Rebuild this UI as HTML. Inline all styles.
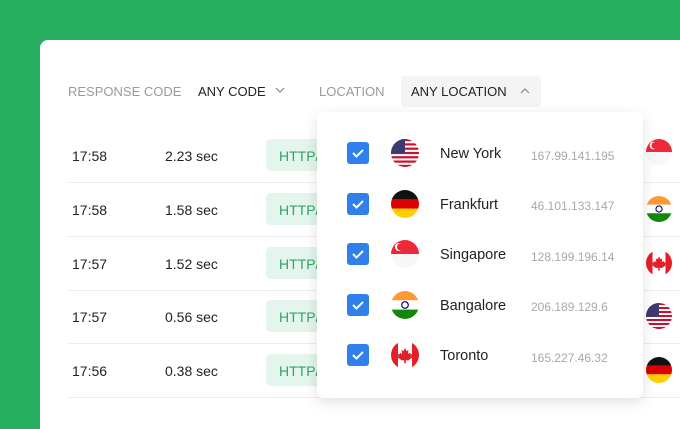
<!DOCTYPE html>
<html><head><meta charset="utf-8"><style>
*{margin:0;padding:0;box-sizing:border-box}
html,body{width:680px;height:429px;overflow:hidden}
body{background:#26ad5f;font-family:"Liberation Sans",Arial,sans-serif;position:relative}
.card{position:absolute;left:40px;top:40px;width:640px;height:389px;background:#fff;border-radius:8px 0 0 0}
.t{position:absolute;white-space:nowrap}
.lbl{font-size:13px;color:#9a9a9a;top:84px}
.val{font-size:13px;color:#222;top:84px}
.row{font-size:14px;color:#222}
.sep{position:absolute;left:68px;width:612px;height:1px;background:#ececec}
.badge{position:absolute;left:266px;width:70px;height:32px;background:#e3f5ec;border-radius:5px;color:#2fa664;font-size:14px;padding:9px 0 0 13px}
.dd{position:absolute;left:317px;top:112px;width:326px;height:286px;background:#fff;border-radius:6px;box-shadow:0 4px 14px rgba(0,0,0,.13)}
.cb{position:absolute;left:347px;width:22px;height:22px;background:#2f80ed;border-radius:3px}
.city{font-size:14.5px;color:#222;left:440px}
.ip{font-size:12px;color:#a8a8a8;left:531px}
svg.f{position:absolute}
</style></head><body>
<div class="card"></div>
<div class="t lbl" style="left:68px">RESPONSE CODE</div>
<div class="t val" style="left:198px">ANY CODE</div>
<svg class="f" style="left:275px;top:86px" width="10" height="8"><path d="M1 2l4 4 4-4" stroke="#888" fill="none" stroke-width="1.2"/></svg>
<div class="t lbl" style="left:319px">LOCATION</div>
<div style="position:absolute;left:401px;top:76px;width:140px;height:31px;background:#f4f4f4;border-radius:4px"></div>
<div class="t val" style="left:411px">ANY LOCATION</div>
<svg class="f" style="left:520px;top:87px" width="10" height="8"><path d="M1 6l4-4 4 4" stroke="#888" fill="none" stroke-width="1.2"/></svg>

<div class="t row" style="left:72px;top:148px">17:58</div><div class="t row" style="left:165px;top:148px">2.23 sec</div><div class="badge" style="top:139px">HTTP/</div>
<div class="sep" style="top:182px"></div>
<div class="t row" style="left:72px;top:202px">17:58</div><div class="t row" style="left:165px;top:202px">1.58 sec</div><div class="badge" style="top:193px">HTTP/</div>
<div class="sep" style="top:236px"></div>
<div class="t row" style="left:72px;top:256px">17:57</div><div class="t row" style="left:165px;top:256px">1.52 sec</div><div class="badge" style="top:247px">HTTP/</div>
<div class="sep" style="top:290px"></div>
<div class="t row" style="left:72px;top:309px">17:57</div><div class="t row" style="left:165px;top:309px">0.56 sec</div><div class="badge" style="top:300px">HTTP/</div>
<div class="sep" style="top:343px"></div>
<div class="t row" style="left:72px;top:363px">17:56</div><div class="t row" style="left:165px;top:363px">0.38 sec</div><div class="badge" style="top:354px">HTTP/</div>
<div class="sep" style="top:397px"></div>

<svg width="0" height="0" style="position:absolute"><defs>
<clipPath id="c"><circle cx="14" cy="14" r="14"/></clipPath>
<g id="us"><g clip-path="url(#c)"><rect width="28" height="28" fill="#fff"/><g fill="#c8102e"><rect y="0" width="28" height="2.2"/><rect y="4.3" width="28" height="2.2"/><rect y="8.6" width="28" height="2.2"/><rect y="12.9" width="28" height="2.2"/><rect y="17.2" width="28" height="2.2"/><rect y="21.5" width="28" height="2.2"/><rect y="25.8" width="28" height="2.2"/></g><rect width="14" height="15" fill="#3c3b6e"/></g></g>
<g id="de"><g clip-path="url(#c)"><rect width="28" height="9.4" fill="#111"/><rect y="9.3" width="28" height="9.4" fill="#dd0000"/><rect y="18.6" width="28" height="9.4" fill="#ffce00"/></g></g>
<g id="sg"><g clip-path="url(#c)"><rect width="28" height="28" fill="#f7f7f7"/><rect width="28" height="14" fill="#ed2939"/><circle cx="8" cy="7" r="4" fill="#fff"/><circle cx="9.5" cy="7" r="3.6" fill="#ed2939"/></g></g>
<g id="in"><g clip-path="url(#c)"><rect width="28" height="9.4" fill="#ff9933"/><rect y="9.3" width="28" height="9.4" fill="#fff"/><rect y="18.6" width="28" height="9.4" fill="#138808"/><circle cx="14" cy="14" r="3.3" fill="none" stroke="#000080" stroke-width="1.2"/></g></g>
<g id="ca"><g clip-path="url(#c)"><rect width="28" height="28" fill="#fff"/><rect width="7" height="28" fill="#e41e26"/><rect x="21" width="7" height="28" fill="#e41e26"/><path d="M14 7l1.5 3 2-1-0.6 4 2-1.2 0.6 1.6 2-0.4-1 2.6 1 0.6-4 3h-2.7v3h-1.6v-3h-2.7l-4-3 1-0.6-1-2.6 2 0.4 0.6-1.6 2 1.2-0.6-4 2 1z" fill="#e41e26"/></g></g>
</defs></svg>

<svg class="f" style="left:646px;top:139px" width="26" height="26" viewBox="0 0 28 28"><use href="#sg"/></svg>
<svg class="f" style="left:646px;top:196px" width="26" height="26" viewBox="0 0 28 28"><use href="#in"/></svg>
<svg class="f" style="left:646px;top:250px" width="26" height="26" viewBox="0 0 28 28"><use href="#ca"/></svg>
<svg class="f" style="left:646px;top:303px" width="26" height="26" viewBox="0 0 28 28"><use href="#us"/></svg>
<svg class="f" style="left:646px;top:357px" width="26" height="26" viewBox="0 0 28 28"><use href="#de"/></svg>

<div class="dd"></div>
<div class="cb" style="top:142px"><svg width="22" height="22"><path d="M6 11l3.5 3.5L16 8" stroke="#fff" stroke-width="2" fill="none"/></svg></div>
<div class="cb" style="top:193px"><svg width="22" height="22"><path d="M6 11l3.5 3.5L16 8" stroke="#fff" stroke-width="2" fill="none"/></svg></div>
<div class="cb" style="top:243px"><svg width="22" height="22"><path d="M6 11l3.5 3.5L16 8" stroke="#fff" stroke-width="2" fill="none"/></svg></div>
<div class="cb" style="top:294px"><svg width="22" height="22"><path d="M6 11l3.5 3.5L16 8" stroke="#fff" stroke-width="2" fill="none"/></svg></div>
<div class="cb" style="top:344px"><svg width="22" height="22"><path d="M6 11l3.5 3.5L16 8" stroke="#fff" stroke-width="2" fill="none"/></svg></div>

<svg class="f" style="left:391px;top:139px" width="28" height="28"><use href="#us"/></svg>
<svg class="f" style="left:391px;top:190px" width="28" height="28"><use href="#de"/></svg>
<svg class="f" style="left:391px;top:240px" width="28" height="28"><use href="#sg"/></svg>
<svg class="f" style="left:391px;top:291px" width="28" height="28"><use href="#in"/></svg>
<svg class="f" style="left:391px;top:341px" width="28" height="28"><use href="#ca"/></svg>

<div class="t city" style="top:146px">New York</div><div class="t ip" style="top:149px">167.99.141.195</div>
<div class="t city" style="top:197px">Frankfurt</div><div class="t ip" style="top:199px">46.101.133.147</div>
<div class="t city" style="top:247px">Singapore</div><div class="t ip" style="top:250px">128.199.196.14</div>
<div class="t city" style="top:298px">Bangalore</div><div class="t ip" style="top:300px">206.189.129.6</div>
<div class="t city" style="top:348px">Toronto</div><div class="t ip" style="top:351px">165.227.46.32</div>
</body></html>
